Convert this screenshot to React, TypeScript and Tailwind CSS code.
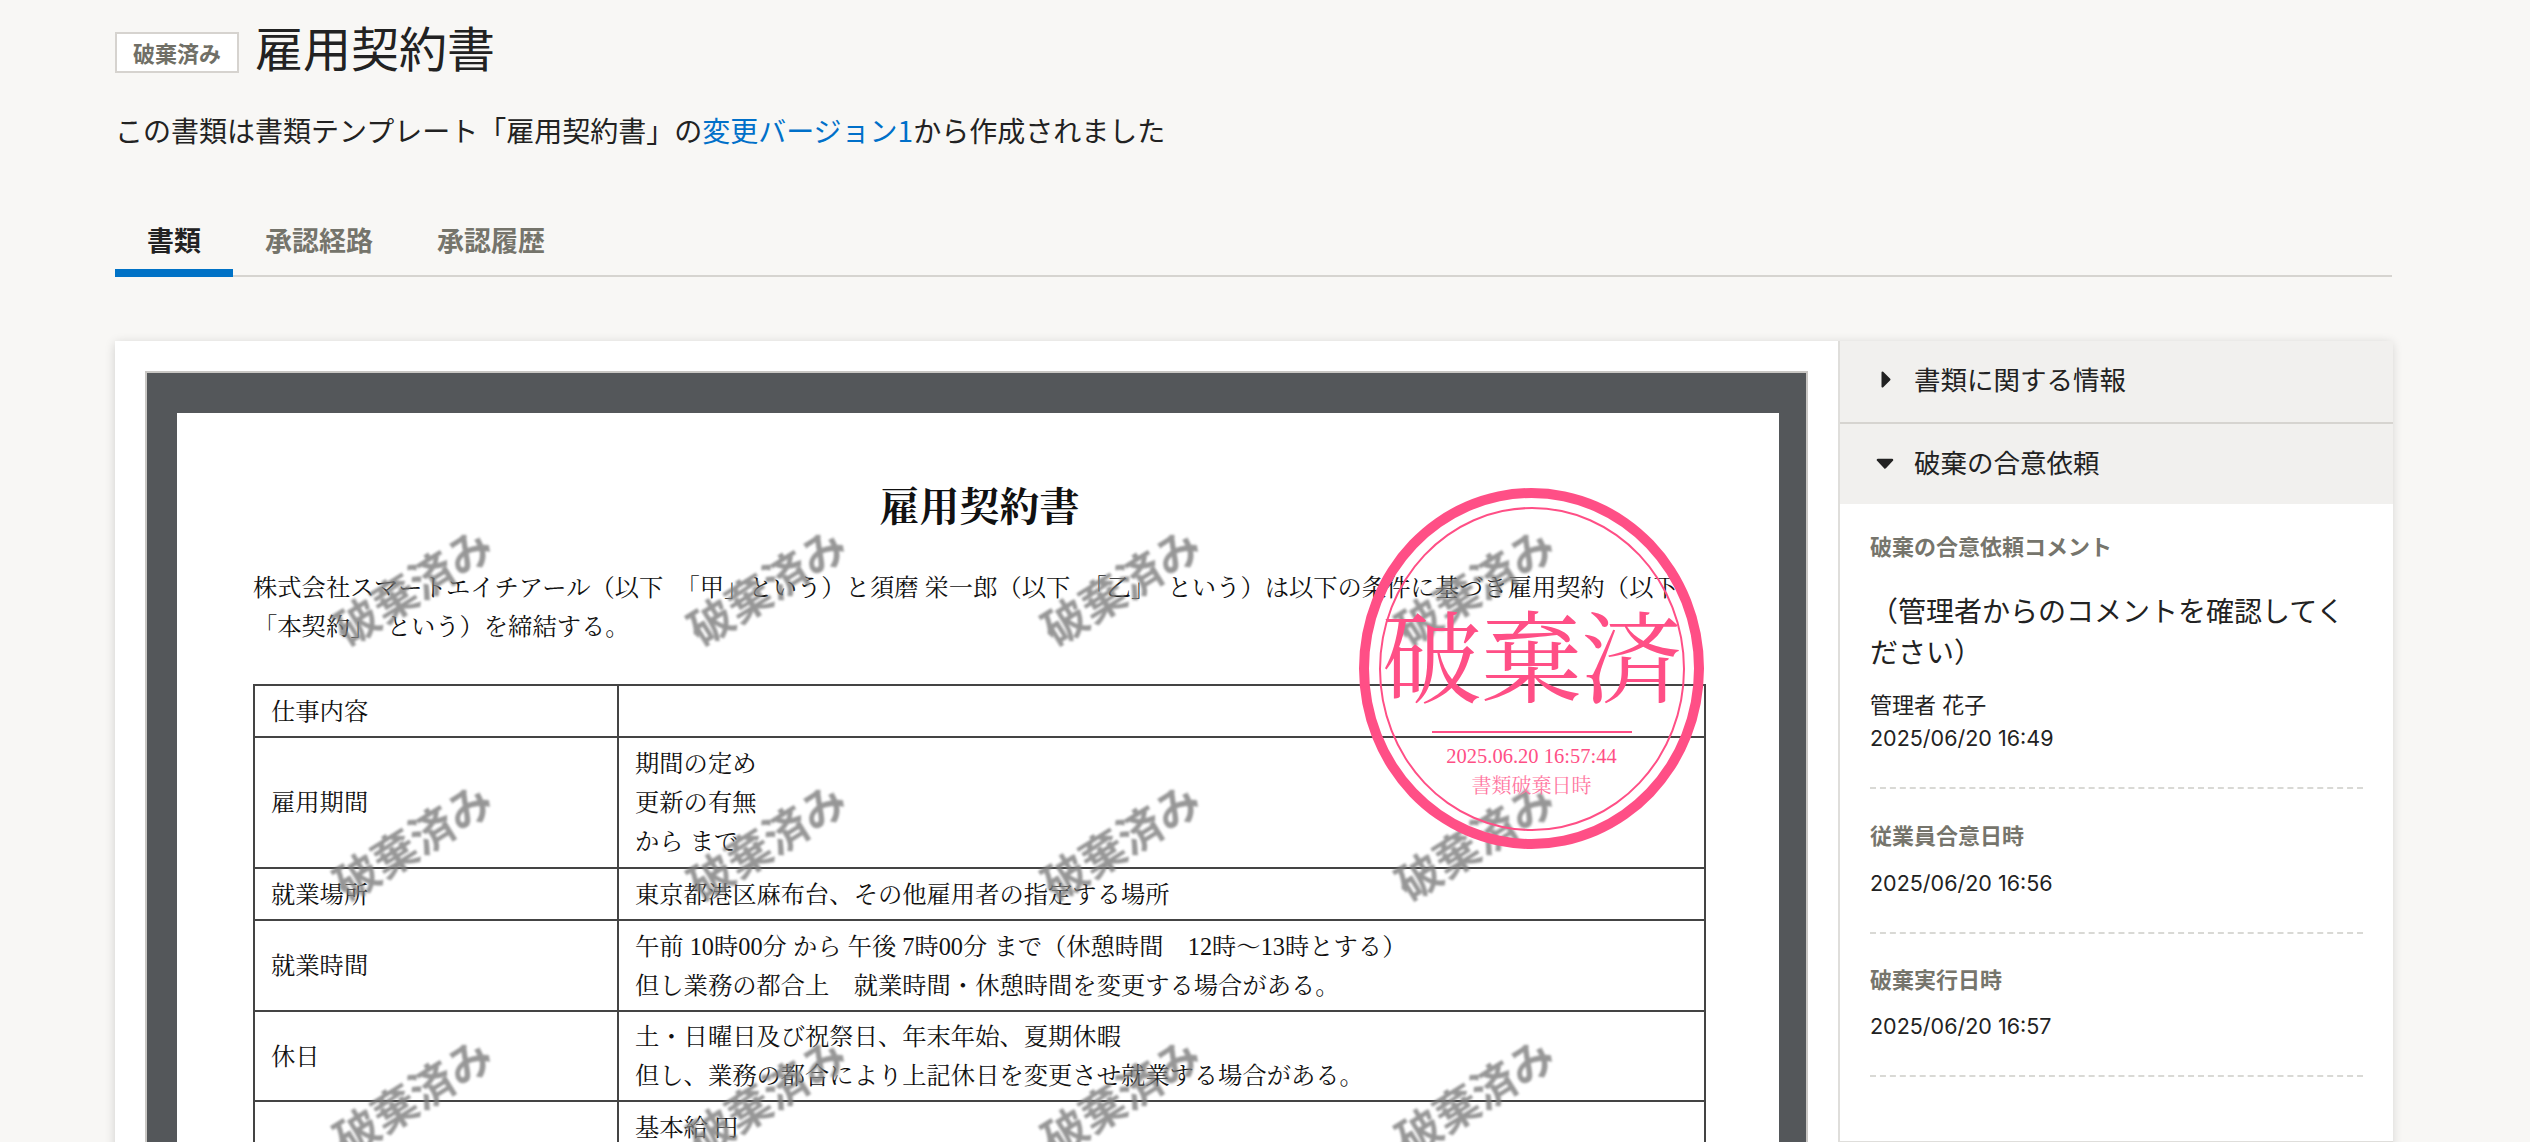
const sans = "font-['Inter','Noto_Sans_CJK_JP',sans-serif]";

function Watermark() {
  return (
    <div className="flex items-center justify-center">
      <span className="-rotate-[32deg] whitespace-nowrap text-[44px] font-bold leading-none text-[#7d7d7d] opacity-80 blur-[1px] font-['Noto_Sans_CJK_JP',sans-serif]">
        破棄済み
      </span>
    </div>
  );
}

function Row({ label, lines, h }: { label: string; lines: string[]; h: string }) {
  return (
    <tr className={h}>
      <td className="border-2 border-[#444444] px-[16px] py-0 align-middle">{label}</td>
      <td className="border-2 border-[#444444] px-[16px] py-0 align-middle">
        {lines.map((l) => (
          <div key={l} className="whitespace-nowrap">{l}</div>
        ))}
      </td>
    </tr>
  );
}

function Info({ title, children, top }: { title: string; children: React.ReactNode; top: string }) {
  return (
    <div className={`${top} border-b-2 border-dashed border-[#d9d9d5] pb-[32px]`}>
      <div className="text-[22px] font-bold leading-[32px] text-[#76756c]">{title}</div>
      {children}
    </div>
  );
}

export default function App() {
  const marks = Array.from({ length: 12 }, (_, i) => i);
  return (
    <div className="h-[1142px] overflow-hidden bg-[#f8f7f5] pl-[115px] pr-[138px] pt-[14px] text-[#222222] font-['Noto_Sans_CJK_JP',sans-serif]">
      <div className="flex items-start gap-[16px]">
        <span className="mt-[18px] flex h-[41px] w-[124px] items-center justify-center border-2 border-[#d6d3cf] bg-white text-[22px] font-bold text-[#706f66]">
          破棄済み
        </span>
        <h1 className="text-[48px] font-normal leading-[64px]">雇用契約書</h1>
      </div>
      <p className="mt-[31px] text-[28px] leading-[42px]">
        この書類は書類テンプレート「雇用契約書」の<span className="text-[#0070c9]">変更バージョン1</span>から作成されました
      </p>

      <div className="mt-[69px] flex h-[57px] border-b-2 border-[#d6d4d0]">
        <div className="-mb-[2px] h-[57px] border-b-8 border-[#0072c6] px-[32px] text-[27px] font-bold leading-[40px]">書類</div>
        <div className="px-[32px] text-[27px] font-bold leading-[40px] text-[#75746b]">承認経路</div>
        <div className="px-[32px] text-[27px] font-bold leading-[40px] text-[#75746b]">承認履歴</div>
      </div>

      <div className="mt-[64px] flex items-start bg-white shadow-[0_2px_10px_rgba(0,0,0,0.16)]">
        <div className="flex-1 px-[30px] pt-[30px]">
          <div className="border-2 border-b-0 border-[#c9c7c4] bg-[#54575a] pl-[30px] pr-[27px] pt-[40px]">
            <div className="relative h-[900px] bg-white pl-[76px] pr-[73px] pt-[65px] text-[24.3px] leading-[39px] text-[#111111] font-['Liberation_Serif','Noto_Serif_CJK_JP','Noto_Sans_CJK_JP',serif]">
              <h2 className="text-center text-[40px] font-bold leading-[60px]">雇用契約書</h2>
              <p className="mt-[30px] whitespace-nowrap">
                株式会社スマートエイチアール（以下　「甲」という）と須磨 栄一郎（以下　「乙」　という）は以下の条件に基づき雇用契約（以下
                <br />
                「本契約」　という）を締結する。
              </p>
              <table className="mt-[38px] w-[1451px] table-fixed border-collapse">
                <colgroup>
                  <col className="w-[364px]" />
                  <col className="w-[1087px]" />
                </colgroup>
                <tbody>
                  <Row h="h-[52px]" label="仕事内容" lines={["\u00a0"]} />
                  <Row h="h-[131px]" label="雇用期間" lines={["期間の定め", "更新の有無", "から まで"]} />
                  <Row h="h-[52px]" label="就業場所" lines={["東京都港区麻布台、その他雇用者の指定する場所"]} />
                  <Row h="h-[91px]" label="就業時間" lines={["午前 10時00分 から 午後 7時00分 まで（休憩時間　12時～13時とする）", "但し業務の都合上　就業時間・休憩時間を変更する場合がある。"]} />
                  <Row h="h-[90px]" label="休日" lines={["土・日曜日及び祝祭日、年末年始、夏期休暇", "但し、業務の都合により上記休日を変更させ就業する場合がある。"]} />
                  <Row h="h-[131px]" label=" " lines={["基本給 円", "\u00a0", "\u00a0"]} />
                </tbody>
              </table>

              <div className="pointer-events-none absolute left-[58px] top-[44px] grid grid-cols-[repeat(4,354px)] auto-rows-[255px]">
                {marks.map((m) => (
                  <Watermark key={m} />
                ))}
              </div>

              <div className="pointer-events-none absolute left-[1182px] top-[75px] flex h-[361px] w-[345px] items-center justify-center rounded-[50%] border-[10px] border-[#ff4f86]">
                <div className="flex h-[324px] w-[306px] flex-col items-center rounded-[50%] border-2 border-[#ff4f86] text-[#ff4f86]">
                  <div className="mt-[98px] h-[124px] whitespace-nowrap text-[100px] leading-[110px]">破棄済</div>
                  <div className="h-[2px] w-[200px] bg-[#ff4f86]" />
                  <div className="mt-[8px] text-[20.5px] leading-[30px]">2025.06.20 16:57:44</div>
                  <div className="text-[20px] leading-[30px] text-[#ff77a2]">書類破棄日時</div>
                </div>
              </div>
            </div>
          </div>
        </div>

        <div className={`h-[802px] w-[555px] shrink-0 border-b-2 border-l-2 border-[#dfdedb] bg-white ${sans}`}>
          <div className="flex h-[83px] items-center gap-[23px] border-b-2 border-[#d6d4d0] bg-[#f1f0ee] pb-[4px] pl-[41px]">
            <svg width="10" height="17" viewBox="0 0 10 17" className="shrink-0">
              <path d="M1.5 1.5 L8.5 8.5 L1.5 15.5 Z" fill="#222222" stroke="#222222" strokeWidth="2" strokeLinejoin="round" />
            </svg>
            <span className="text-[26.5px] leading-[40px]">書類に関する情報</span>
          </div>
          <div className="flex h-[80px] items-center gap-[20px] bg-[#f1f0ee] pb-[2px] pl-[36px]">
            <svg width="18" height="11" viewBox="0 0 18 11" className="shrink-0">
              <path d="M2 2 L16 2 L9 9.5 Z" fill="#222222" stroke="#222222" strokeWidth="2.5" strokeLinejoin="round" />
            </svg>
            <span className="text-[26.5px] leading-[40px]">破棄の合意依頼</span>
          </div>
          <div className="px-[30px]">
            <Info top="pt-[27px]" title="破棄の合意依頼コメント">
              <p className="mt-[29px] text-[28px] leading-[41px]">（管理者からのコメントを確認してください）</p>
              <p className="mt-[15px] text-[22px] leading-[33px]">管理者 花子</p>
              <p className="text-[21.5px] leading-[33px]">2025/06/20 16:49</p>
            </Info>
            <Info top="pt-[31px]" title="従業員合意日時">
              <p className="mt-[15px] text-[21.5px] leading-[33px]">2025/06/20 16:56</p>
            </Info>
            <Info top="pt-[30px]" title="破棄実行日時">
              <p className="mt-[14px] text-[21.5px] leading-[33px]">2025/06/20 16:57</p>
            </Info>
          </div>
        </div>
      </div>
    </div>
  );
}
